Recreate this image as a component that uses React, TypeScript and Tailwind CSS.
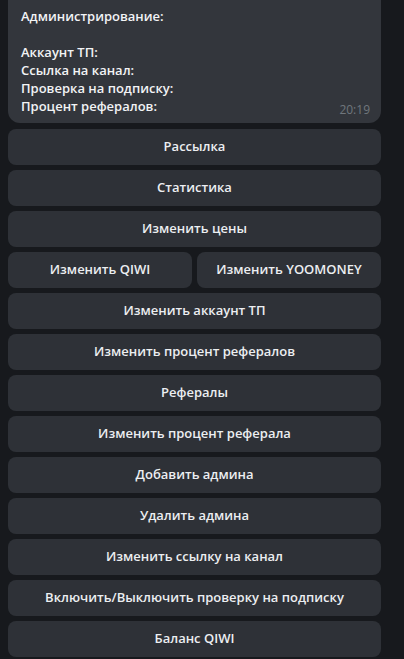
export default function App() {
  const rows: string[][] = [
    ["Рассылка"],
    ["Статистика"],
    ["Изменить цены"],
    ["Изменить QIWI", "Изменить YOOMONEY"],
    ["Изменить аккаунт ТП"],
    ["Изменить процент рефералов"],
    ["Рефералы"],
    ["Изменить процент реферала"],
    ["Добавить админа"],
    ["Удалить админа"],
    ["Изменить ссылку на канал"],
    ["Включить/Выключить проверку на подписку"],
    ["Баланс QIWI"],
  ];

  return (
    <div
      className="w-[404px] h-[659px] overflow-hidden bg-[#17191d] text-white"
      style={{ fontFamily: '"Open Sans", "Noto Sans", sans-serif' }}
    >
      <div className="w-[373px] ml-2 flex flex-col">
        {/* сообщение */}
        <div className="relative bg-[#33363c] rounded-b-xl h-[123px] px-[13px] pt-[7px] text-[13px] leading-[18px] font-semibold text-[#f2f3f5]">
          <div>Администрирование:</div>
          <div className="h-[18px]" />
          <div>Аккаунт ТП:</div>
          <div>Ссылка на канал:</div>
          <div>Проверка на подписку:</div>
          <div>Процент рефералов:</div>
          <span className="absolute right-[11px] bottom-[4px] text-[12px] font-normal text-[#70767d]">
            20:19
          </span>
        </div>

        {/* кнопки */}
        <div className="mt-[6px] flex flex-col gap-[5px]">
          {rows.map((row, i) => (
            <div key={i} className="flex gap-[5px]">
              {row.map((label) => (
                <div
                  key={label}
                  className="flex-1 h-9 rounded-lg bg-[#2e3137] flex items-center justify-center text-[13px] font-semibold text-[#eceef1]"
                >
                  {label}
                </div>
              ))}
            </div>
          ))}
        </div>
      </div>
    </div>
  );
}
